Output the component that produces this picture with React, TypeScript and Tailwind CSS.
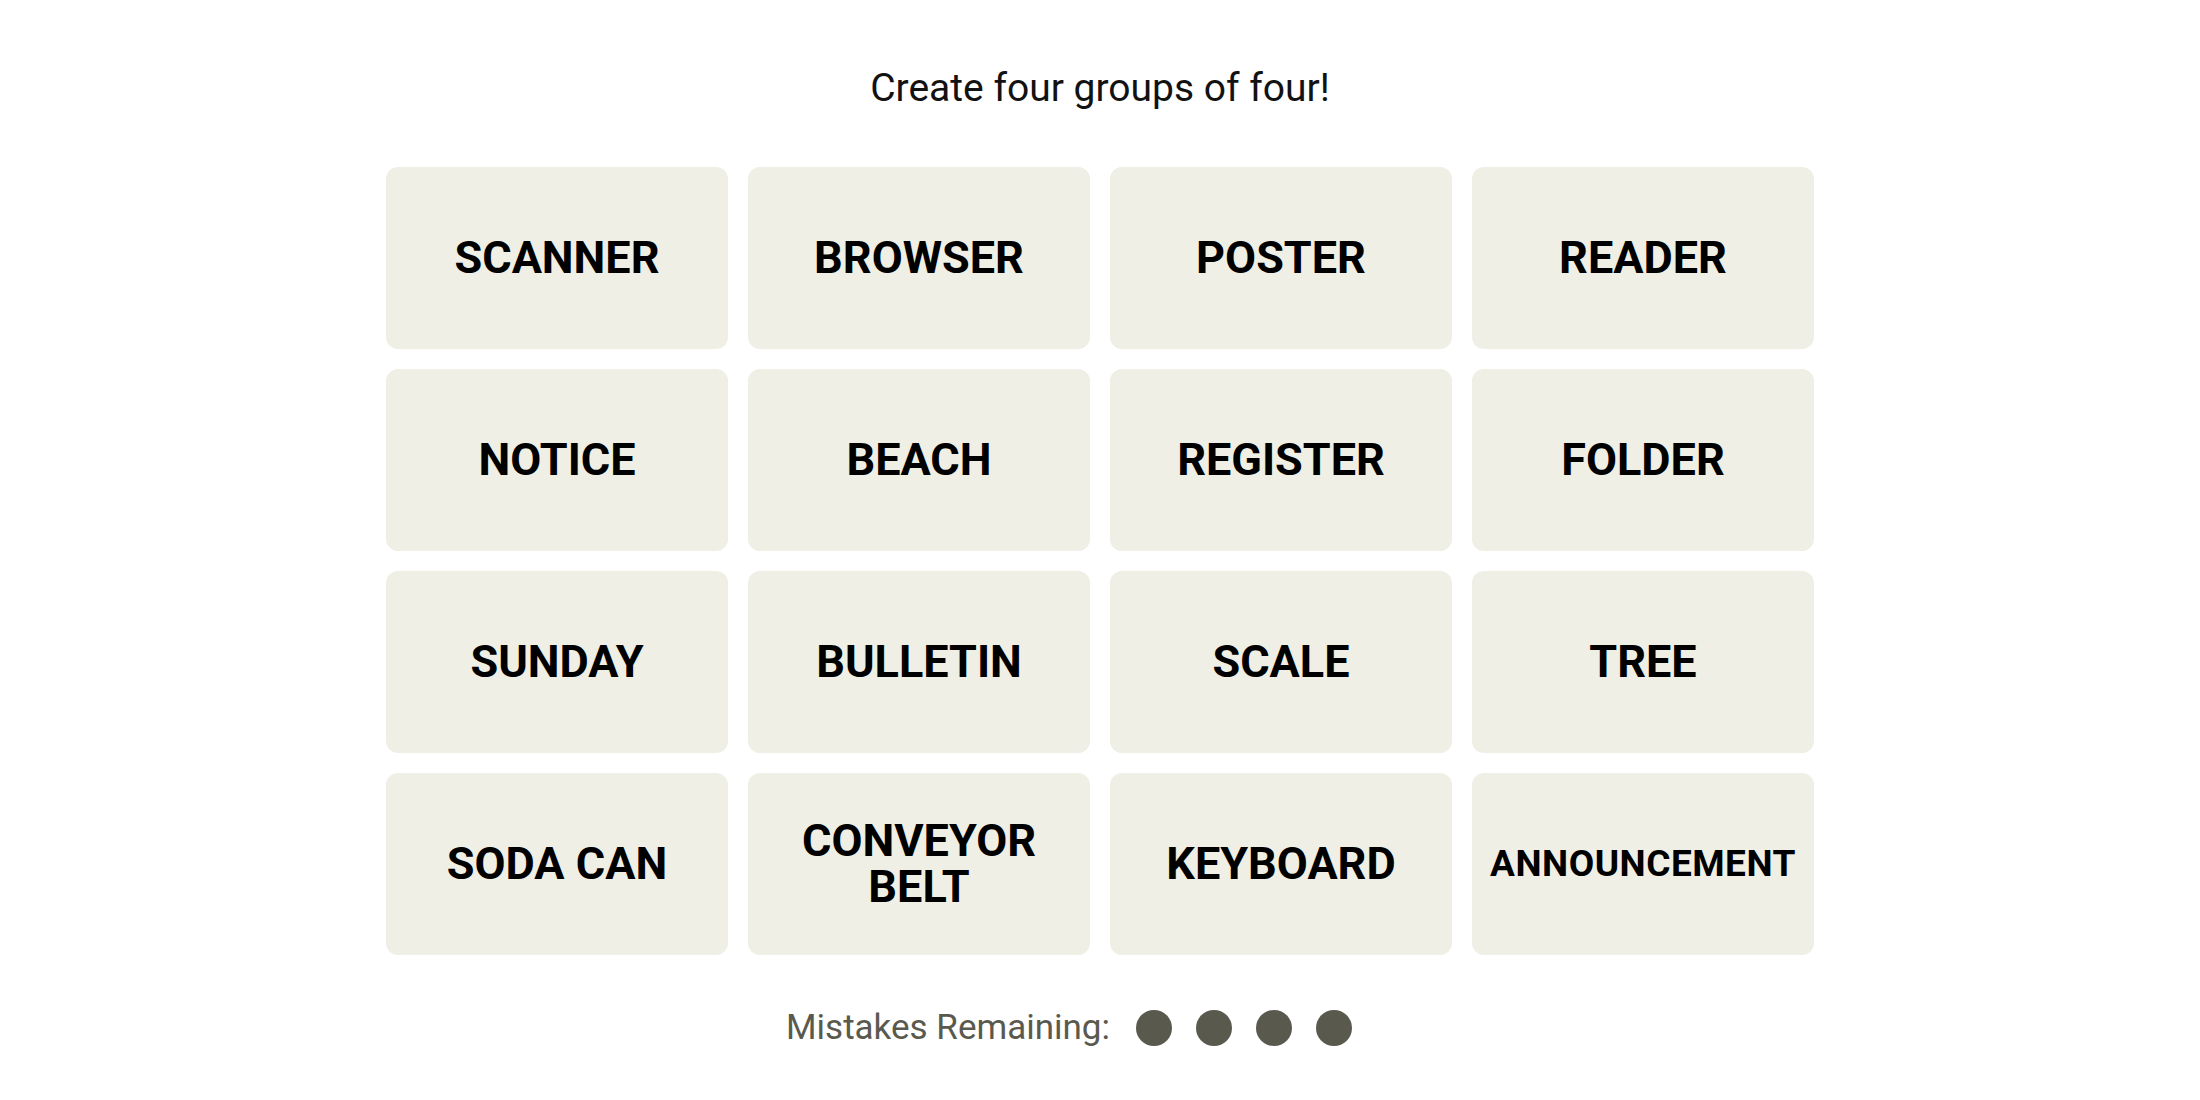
import React from 'react'

const words = [
  'SCANNER', 'BROWSER', 'POSTER', 'READER',
  'NOTICE', 'BEACH', 'REGISTER', 'FOLDER',
  'SUNDAY', 'BULLETIN', 'SCALE', 'TREE',
  'SODA CAN', 'CONVEYOR BELT', 'KEYBOARD', 'ANNOUNCEMENT',
]

function Tile({ word }: { word: string }) {
  const long = word.length > 10 && !word.includes(' ')
  const twoLine = word === 'CONVEYOR BELT'
  return (
    <div className="flex h-[182px] w-[342px] items-center justify-center rounded-[12px] bg-[#efefe6] px-4 text-center">
      {twoLine ? (
        <div className="flex flex-col items-center text-[45px] font-bold uppercase text-black">
          <span className="block leading-[46px]">CONVEYOR</span>
          <span className="block leading-[46px]">BELT</span>
        </div>
      ) : (
        <span
          className={
            long
              ? 'text-[37px] font-bold uppercase leading-[1.05] tracking-[0.5px] text-black'
              : 'text-[45px] font-bold uppercase leading-[1.02] text-black'
          }
        >
          {word}
        </span>
      )}
    </div>
  )
}

export default function App() {
  return (
    <div className="flex min-h-screen w-full flex-col items-center bg-white pt-[65px] font-['Roboto',sans-serif]">
      {/* Prompt */}
      <p className="text-[39px] leading-[46px] text-[#121212]">Create four groups of four!</p>

      {/* Board */}
      <div className="mt-[56px] grid grid-cols-4 gap-x-[20px] gap-y-[20px]">
        {words.map((w) => (
          <Tile key={w} word={w} />
        ))}
      </div>

      {/* Mistakes */}
      <div className="mr-[62px] mt-[52px] flex items-center">
        <span className="text-[35px] leading-[42px] text-[#5a594e]">Mistakes Remaining:</span>
        <div className="ml-[26px] flex gap-[24px]">
          {[0, 1, 2, 3].map((i) => (
            <span key={i} className="block h-[36px] w-[36px] rounded-full bg-[#5a594e]" />
          ))}
        </div>
      </div>
    </div>
  )
}
